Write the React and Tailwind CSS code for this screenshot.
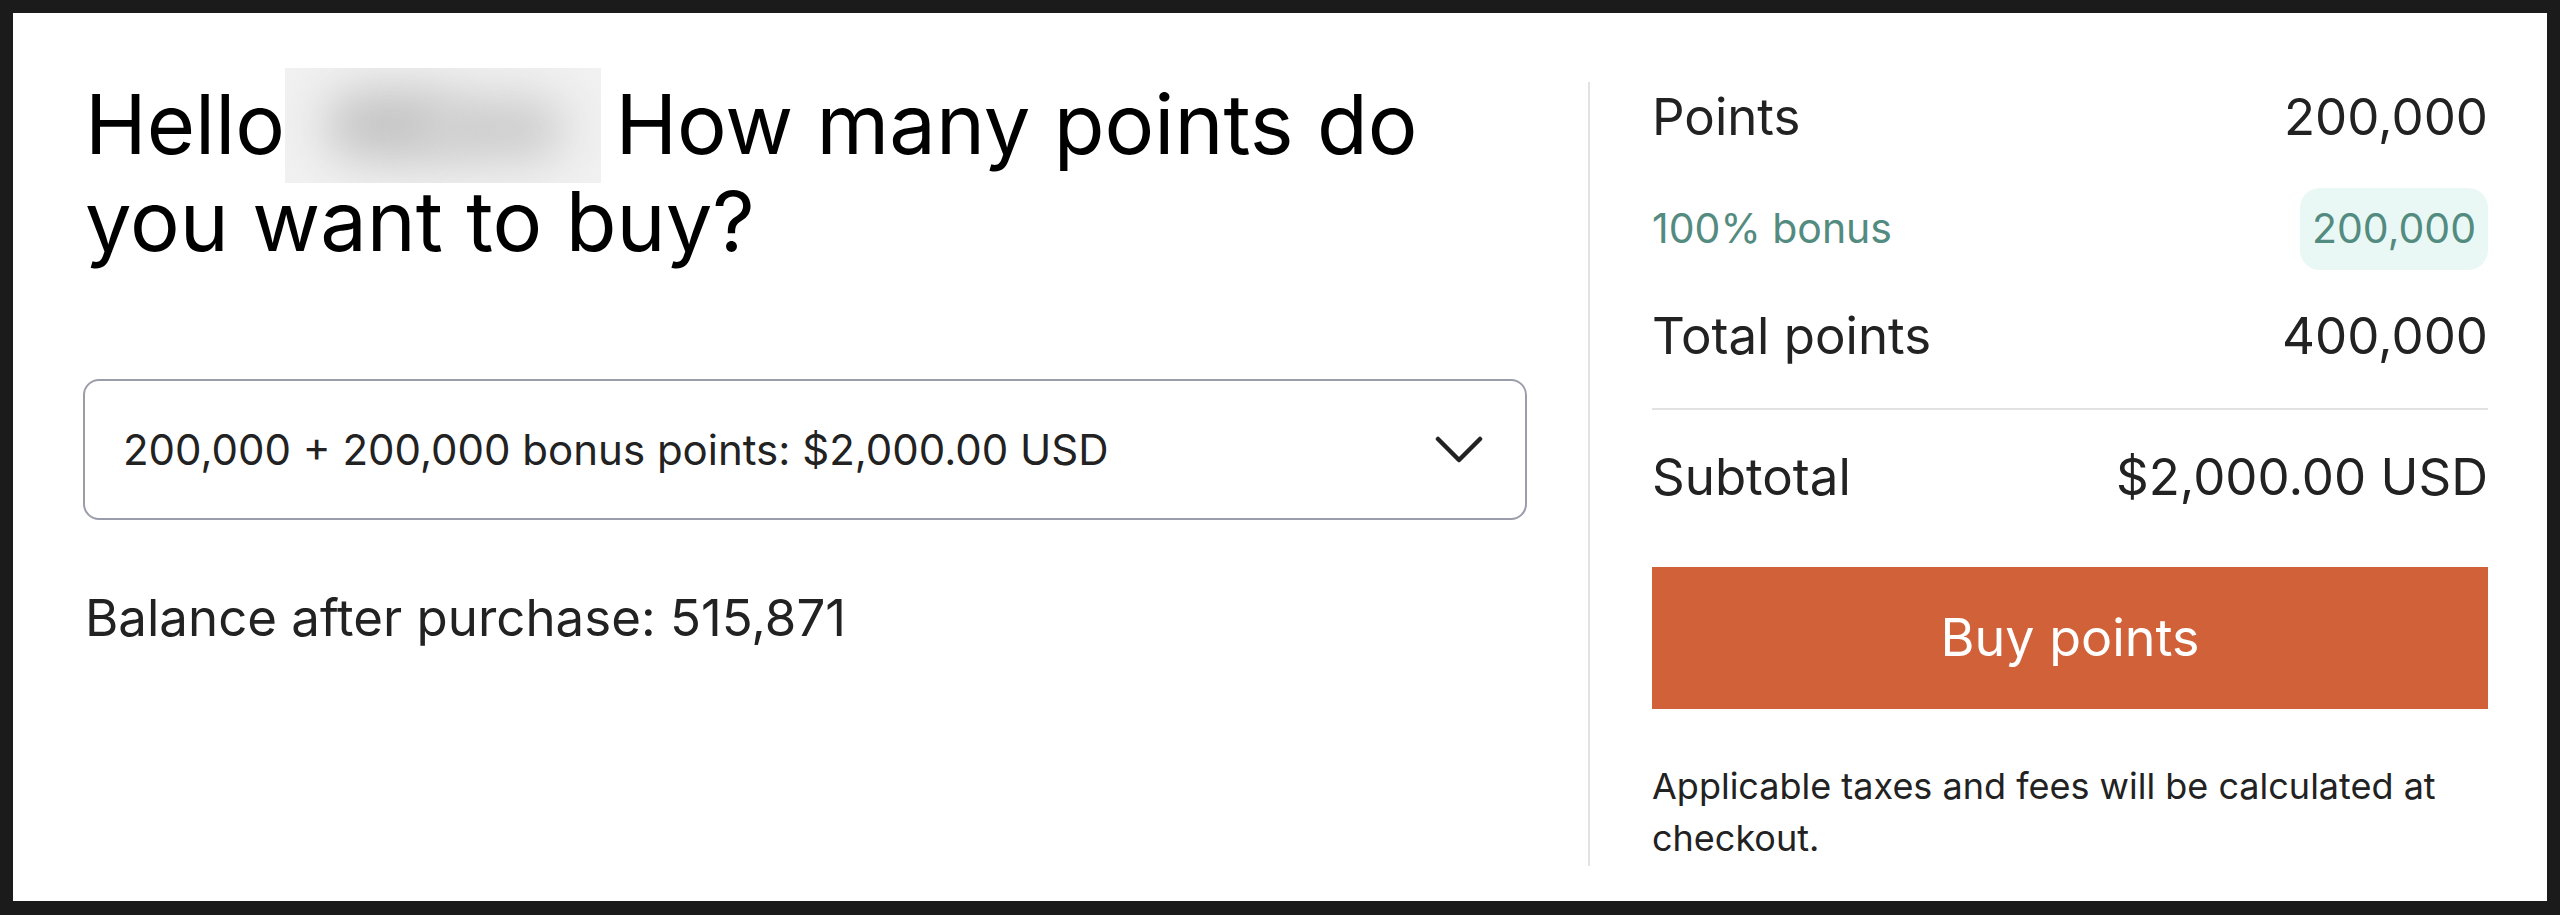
import React from 'react';

function Row({ label, value }) {
  return (
    <div className="flex items-center justify-between text-[51px] leading-[70px] text-[#222222]">
      <span>{label}</span>
      <span>{value}</span>
    </div>
  );
}

export default function App() {
  return (
    <div className="min-h-screen w-full bg-[#1b1b1b] p-[13px] font-['Inter',sans-serif]">
      <div className="flex h-[888px] bg-white pl-[70px] pr-[59px]">
        {/* left side */}
        <div className="w-[1444px] pt-[63px]">
          <h1 className="pl-[2px] text-[83px] leading-[97px] font-normal text-black">
            Hello
            <span className="relative mr-[-9px] inline-block h-0 w-[316px]">
              <span className="absolute left-0 right-0 bottom-[-29px] h-[115px] overflow-hidden bg-[#f1f1f1]">
                <span className="absolute left-[40px] top-[22px] h-[70px] w-[130px] rounded-full bg-[#c4c4c4] blur-xl" />
                <span className="absolute left-[140px] top-[30px] h-[62px] w-[140px] rounded-full bg-[#cbcbcb] blur-xl" />
              </span>
            </span>{' '}
            How many points do
            <br />
            you want to buy?
          </h1>

          <button
            type="button"
            className="mt-[109px] flex h-[141px] w-full items-center justify-between rounded-[16px] border-2 border-[#9b9dab] pl-[38px] pr-[42px] text-left text-[42px] text-[#222222]"
          >
            <span>200,000 + 200,000 bonus points: $2,000.00 USD</span>
            <svg width="48" height="28" viewBox="0 0 48 28" fill="none">
              <path d="M3 3 L24 24 L45 3" stroke="#222222" strokeWidth="4.5" strokeLinecap="round" strokeLinejoin="round" />
            </svg>
          </button>

          <p className="mt-[63px] pl-[2px] text-[51px] leading-[70px] text-[#222222]">Balance after purchase: 515,871</p>
        </div>

        <div className="ml-[61px] mt-[69px] mb-[35px] w-[2px] bg-[#e2e2e2]" />

        {/* summary */}
        <div className="ml-[62px] w-[836px] pt-[69px]">
          <Row label="Points" value="200,000" />

          <div className="mt-[36px] flex h-[82px] items-center justify-between text-[41px] text-[#548b80]">
            <span>100% bonus</span>
            <span className="flex h-[82px] items-center rounded-[20px] bg-[#eaf8f5] px-[12px]">200,000</span>
          </div>

          <div className="mt-[31px]">
            <Row label="Total points" value="400,000" />
          </div>

          <div className="mt-[37px] h-[2px] bg-[#e2e2e2]" />

          <div className="mt-[32px]">
            <Row label="Subtotal" value="$2,000.00 USD" />
          </div>

          <button
            type="button"
            className="mt-[55px] flex h-[142px] w-full items-center justify-center bg-[#d06138] text-[52px] text-white"
          >
            Buy points
          </button>

          <p className="mt-[51px] text-[36px] leading-[52px] text-[#222222]">
            Applicable taxes and fees will be calculated at checkout.
          </p>
        </div>
      </div>
    </div>
  );
}
